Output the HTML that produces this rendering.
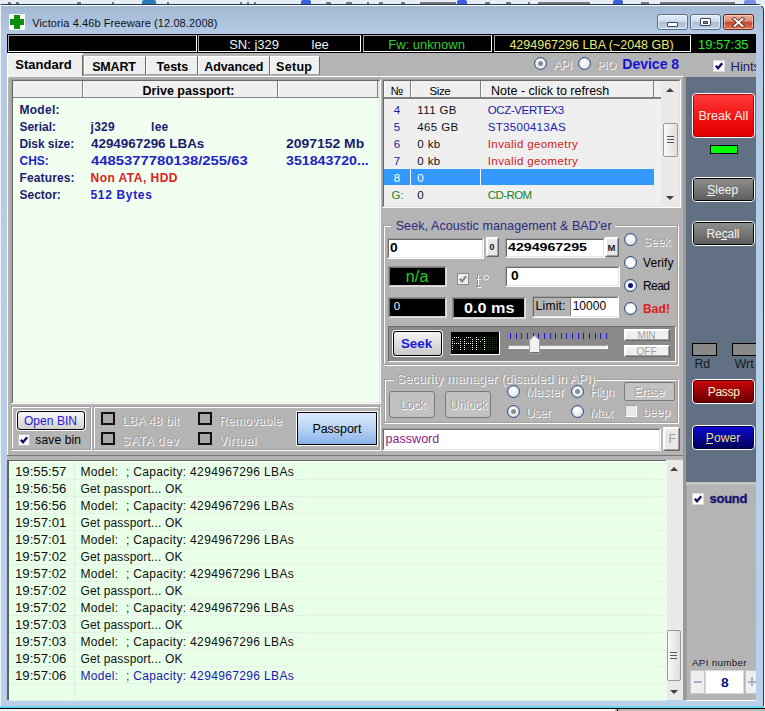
<!DOCTYPE html>
<html><head><meta charset="utf-8">
<style>
*{box-sizing:border-box;margin:0;padding:0}
html,body{width:765px;height:711px;overflow:hidden;background:#f4f6f9;font-family:"Liberation Sans",sans-serif;position:relative}
.a{position:absolute}
.t{position:absolute;white-space:pre;line-height:1}
</style></head><body>
<div class="a" style="left:0px;top:0px;width:765px;height:711px;background:#f4f6f9"></div>
<div class="a" style="left:0px;top:0px;width:765px;height:4px;background:#e6edf6"></div>
<div class="a" style="left:142px;top:0px;width:14px;height:4px;background:#2a7ab8;border-radius:2px 2px 0 0"></div>
<div class="a" style="left:301px;top:0px;width:10px;height:4px;background:#3a5ee0;border-radius:2px 2px 0 0"></div>
<div class="a" style="left:457px;top:0px;width:10px;height:4px;background:#3a5ee0;border-radius:2px 2px 0 0"></div>
<div class="a" style="left:613px;top:0px;width:10px;height:4px;background:#3a5ee0;border-radius:2px 2px 0 0"></div>
<div class="a" style="left:744px;top:0px;width:12px;height:4px;background:#7a8ee8;border-radius:2px 2px 0 0"></div>
<div class="a" style="left:8px;top:2px;width:3px;height:2px;background:#1a1a1a;opacity:.55"></div>
<div class="a" style="left:16px;top:2px;width:3px;height:2px;background:#1a1a1a;opacity:.55"></div>
<div class="a" style="left:77px;top:2px;width:4px;height:2px;background:#1a1a1a;opacity:.55"></div>
<div class="a" style="left:112px;top:2px;width:2px;height:2px;background:#1a1a1a;opacity:.55"></div>
<div class="a" style="left:167px;top:2px;width:2px;height:2px;background:#1a1a1a;opacity:.55"></div>
<div class="a" style="left:240px;top:2px;width:2px;height:2px;background:#1a1a1a;opacity:.55"></div>
<div class="a" style="left:247px;top:2px;width:2px;height:2px;background:#1a1a1a;opacity:.55"></div>
<div class="a" style="left:254px;top:2px;width:2px;height:2px;background:#1a1a1a;opacity:.55"></div>
<div class="a" style="left:326px;top:2px;width:5px;height:2px;background:#1a1a1a;opacity:.55"></div>
<div class="a" style="left:346px;top:2px;width:6px;height:2px;background:#1a1a1a;opacity:.55"></div>
<div class="a" style="left:367px;top:2px;width:2px;height:2px;background:#1a1a1a;opacity:.55"></div>
<div class="a" style="left:379px;top:2px;width:4px;height:2px;background:#1a1a1a;opacity:.55"></div>
<div class="a" style="left:401px;top:2px;width:4px;height:2px;background:#1a1a1a;opacity:.55"></div>
<div class="a" style="left:420px;top:2px;width:36px;height:2px;background:#1a1a1a;opacity:.55"></div>
<div class="a" style="left:485px;top:2px;width:5px;height:2px;background:#1a1a1a;opacity:.55"></div>
<div class="a" style="left:506px;top:2px;width:5px;height:2px;background:#1a1a1a;opacity:.55"></div>
<div class="a" style="left:528px;top:2px;width:2px;height:2px;background:#1a1a1a;opacity:.55"></div>
<div class="a" style="left:538px;top:2px;width:52px;height:2px;background:#1a1a1a;opacity:.55"></div>
<div class="a" style="left:641px;top:2px;width:8px;height:2px;background:#1a1a1a;opacity:.55"></div>
<div class="a" style="left:660px;top:2px;width:75px;height:2px;background:#1a1a1a;opacity:.55"></div>
<div class="a" style="left:0px;top:4px;width:764px;height:704px;background:linear-gradient(#a2b8d3,#b4cae4 30px,#b9d1ea);border-radius:0 6px 0 0;border:1px solid #24384e;border-bottom:none;border-left-color:#f0f4f8"></div>
<div class="a" style="left:1px;top:5px;width:761px;height:1px;background:#fff"></div>
<div class="a" style="left:0px;top:706px;width:764px;height:2px;background:#6cd4ee"></div>
<div class="a" style="left:0px;top:708px;width:765px;height:1px;background:#000"></div>
<div class="a" style="left:0px;top:709px;width:765px;height:2px;background:#f6f6f6"></div>
<div class="a" style="left:615px;top:709px;width:150px;height:2px;background:#303030;opacity:.3"></div>
<div class="a" style="left:617px;top:709px;width:1px;height:2px;background:#000"></div>
<div class="a" style="left:764px;top:4px;width:1px;height:704px;background:#f4f4f4"></div>
<div class="a" style="left:9px;top:14px;width:16px;height:16px;background:#fff"></div>
<div class="a" style="left:10px;top:19px;width:14px;height:6px;background:#0b8f0b"></div>
<div class="a" style="left:14px;top:15px;width:6px;height:14px;background:#0b8f0b"></div>
<div class="t" style="left:32.3px;top:18.14px;font-size:11px;font-weight:400;color:#0a1220;letter-spacing:0.09px;">Victoria 4.46b Freeware (12.08.2008)</div>
<div class="a" style="left:657px;top:14px;width:31px;height:16px;border:1px solid #5c6d88;border-radius:3px;background:linear-gradient(#e6eef8,#cfdcec 45%,#a9bdd6 52%,#c0d2e8);box-shadow:inset 0 0 0 1px rgba(255,255,255,.6)"></div>
<div class="a" style="left:690px;top:14px;width:31px;height:16px;border:1px solid #5c6d88;border-radius:3px;background:linear-gradient(#e6eef8,#cfdcec 45%,#a9bdd6 52%,#c0d2e8);box-shadow:inset 0 0 0 1px rgba(255,255,255,.6)"></div>
<div class="a" style="left:667px;top:22px;width:11px;height:5px;background:#fff;border:1px solid #404a5c;border-radius:1px"></div>
<div class="a" style="left:700px;top:18px;width:11px;height:8px;background:#fff;border:1px solid #3a4456;border-radius:1px"></div>
<div class="a" style="left:703px;top:21px;width:5px;height:3px;background:#8a96a8;border:1px solid #3a4456"></div>
<div class="a" style="left:723px;top:14px;width:31px;height:16px;border:1px solid #6a2418;border-radius:3px;background:linear-gradient(#eeb09e,#df8a72 45%,#c9472c 52%,#dc7658);box-shadow:inset 0 0 0 1px rgba(255,220,200,.6)"></div>
<svg class="a" style="left:732px;top:17px" width="13" height="11" viewBox="0 0 13 11"><path d="M2.5 2 L10.5 9 M10.5 2 L2.5 9" stroke="#4a2018" stroke-width="3.6" stroke-linecap="square"/><path d="M2.5 2 L10.5 9 M10.5 2 L2.5 9" stroke="#fff" stroke-width="2" stroke-linecap="square"/></svg>
<div class="a" style="left:0;top:0;width:756px;height:701px;overflow:hidden">
<div class="a" style="left:7px;top:34px;width:749px;height:666px;background:#b4b4b4"></div>
<div class="a" style="left:7px;top:34px;width:749px;height:19px;background:#000"></div>
<div class="a" style="left:8px;top:35px;width:189px;height:17px;border:1px solid;border-color:#a8a8a8 #fff #fff #a8a8a8"></div>
<div class="a" style="left:198px;top:35px;width:163px;height:17px;border:1px solid;border-color:#a8a8a8 #fff #fff #a8a8a8"></div>
<div class="a" style="left:363px;top:35px;width:129px;height:17px;border:1px solid;border-color:#a8a8a8 #fff #fff #a8a8a8"></div>
<div class="a" style="left:494px;top:35px;width:197px;height:17px;border:1px solid;border-color:#a8a8a8 #fff #fff #a8a8a8"></div>
<div class="t" style="left:229.2px;top:38.05px;font-size:13px;font-weight:400;color:#f0f0f0;">SN: j329</div>
<div class="t" style="left:311.5px;top:38.05px;font-size:13px;font-weight:400;color:#f0f0f0;">lee</div>
<div class="t" style="left:388.3px;top:38.05px;font-size:13px;font-weight:400;color:#33cc33;">Fw: unknown</div>
<div class="t" style="left:509.4px;top:39.27px;font-size:12.5px;font-weight:400;color:#e8e870;">4294967296 LBA (~2048 GB)</div>
<div class="t" style="left:698px;top:38.05px;font-size:13px;font-weight:400;color:#22ee22;">19:57:35</div>
<div class="a" style="left:7px;top:53px;width:76px;height:25px;background:#efefef;border-left:1px solid #fff;border-top:1px solid #fff"></div>
<div class="a" style="left:82px;top:55px;width:1px;height:21px;background:#696969"></div>
<div class="a" style="left:83px;top:55px;width:1px;height:21px;background:#a0a0a0"></div>
<div class="t" style="left:15.3px;top:58.25px;font-size:13px;font-weight:700;color:#000;">Standard</div>
<div class="a" style="left:84px;top:56px;width:62px;height:19px;background:#efefef;border-top:1px solid #fff;border-left:1px solid #fff;border-right:1px solid #696969;border-bottom:1px solid #a0a0a0"></div>
<div class="t" style="left:92.2px;top:60.67px;font-size:12.5px;font-weight:700;color:#000;letter-spacing:-0.16px;">SMART</div>
<div class="a" style="left:146px;top:56px;width:52px;height:19px;background:#efefef;border-top:1px solid #fff;border-left:1px solid #fff;border-right:1px solid #696969;border-bottom:1px solid #a0a0a0"></div>
<div class="t" style="left:156.5px;top:60.67px;font-size:12.5px;font-weight:700;color:#000;">Tests</div>
<div class="a" style="left:198px;top:56px;width:72px;height:19px;background:#efefef;border-top:1px solid #fff;border-left:1px solid #fff;border-right:1px solid #696969;border-bottom:1px solid #a0a0a0"></div>
<div class="t" style="left:204.3px;top:60.67px;font-size:12.5px;font-weight:700;color:#000;letter-spacing:-0.11px;">Advanced</div>
<div class="a" style="left:270px;top:56px;width:50px;height:19px;background:#efefef;border-top:1px solid #fff;border-left:1px solid #fff;border-right:1px solid #696969;border-bottom:1px solid #a0a0a0"></div>
<div class="t" style="left:276px;top:60.67px;font-size:12.5px;font-weight:700;color:#000;letter-spacing:0.32px;">Setup</div>
<div class="a" style="left:83px;top:76px;width:600px;height:1px;background:#fff"></div>
<div class="a" style="left:7px;top:77px;width:1px;height:378px;background:#fff"></div>
<div class="a" style="left:534px;top:57px;width:13px;height:13px;border-radius:50%;border:1px solid #2f4f7a;background:radial-gradient(circle at 40% 35%,#fff,#ececec 60%,#dcdcdc);box-shadow:inset 0 0 0 1px #c8d4e4"></div>
<div class="a" style="left:538px;top:61px;width:5px;height:5px;border-radius:50%;background:#8c8c8c"></div>
<div class="t" style="left:553.2px;top:59.29px;font-size:12px;font-weight:400;color:#a0a0a0;letter-spacing:-0.27px;text-shadow:1px 1px 0 #fff;">API</div>
<div class="a" style="left:578px;top:57px;width:13px;height:13px;border-radius:50%;border:1px solid #2f4f7a;background:radial-gradient(circle at 40% 35%,#fff,#ececec 60%,#dcdcdc);box-shadow:inset 0 0 0 1px #c8d4e4"></div>
<div class="t" style="left:597.2px;top:60.14px;font-size:11px;font-weight:400;color:#a0a0a0;text-shadow:1px 1px 0 #fff;">PIO</div>
<div class="t" style="left:622.3px;top:57.30px;font-size:14px;font-weight:700;color:#1414d8;">Device 8</div>
<div class="a" style="left:713px;top:60px;width:12px;height:12px;background:#fff;border:1px solid #d8d8d8"></div>
<svg class="a" style="left:713px;top:60px" width="12" height="12" viewBox="0 0 12 12"><path d="M2.8 5.8 L5 8.2 L9.2 3.2" stroke="#101060" stroke-width="2.4" fill="none"/></svg>
<div class="t" style="left:730.5px;top:59.75px;font-size:13px;font-weight:400;color:#1a1a6a;">Hints</div>
<div class="a" style="left:9px;top:77px;width:372px;height:327px;background:#adadad"></div>
<div class="a" style="left:11px;top:79px;width:370px;height:325px;border:1px solid;border-color:#a0a0a0 #fff #fff #a0a0a0"></div>
<div class="a" style="left:12px;top:80px;width:368px;height:323px;border:1px solid;border-color:#696969 #e3e3e3 #e3e3e3 #696969;background:#f0fff0;"></div>
<div class="a" style="left:13px;top:81px;width:366px;height:16px;background:#efefef"></div>
<div class="a" style="left:13px;top:97px;width:366px;height:1px;background:#808080"></div>
<div class="a" style="left:82px;top:81px;width:1px;height:16px;background:#808080"></div>
<div class="a" style="left:83px;top:81px;width:1px;height:16px;background:#fff"></div>
<div class="a" style="left:277px;top:81px;width:1px;height:16px;background:#808080"></div>
<div class="a" style="left:278px;top:81px;width:1px;height:16px;background:#fff"></div>
<div class="a" style="left:377px;top:81px;width:1px;height:16px;background:#808080"></div>
<div class="t" style="left:142.5px;top:84.87px;font-size:12.5px;font-weight:700;color:#000;letter-spacing:0.02px;">Drive passport:</div>
<div class="t" style="left:19.5px;top:103.89px;font-size:12px;font-weight:700;color:#1c1c70;letter-spacing:0.27px;">Model:</div>
<div class="t" style="left:19.5px;top:120.89px;font-size:12px;font-weight:700;color:#1c1c70;letter-spacing:-0.03px;">Serial:</div>
<div class="t" style="left:19.5px;top:137.89px;font-size:12px;font-weight:700;color:#1c1c70;letter-spacing:-0.08px;">Disk size:</div>
<div class="t" style="left:19.5px;top:154.89px;font-size:12px;font-weight:700;color:#2222c8;">CHS:</div>
<div class="t" style="left:19.5px;top:171.89px;font-size:12px;font-weight:700;color:#1c1c70;letter-spacing:0.13px;">Features:</div>
<div class="t" style="left:19.5px;top:188.89px;font-size:12px;font-weight:700;color:#1c1c70;">Sector:</div>
<div class="t" style="left:90.5px;top:120.89px;font-size:12px;font-weight:700;color:#1c1c70;letter-spacing:0.3px;">j329</div>
<div class="t" style="left:151px;top:120.89px;font-size:12px;font-weight:700;color:#1c1c70;letter-spacing:0.3px;">lee</div>
<div class="t" style="left:90.5px;top:137.89px;font-size:12px;font-weight:700;color:#1c1c70;transform:scaleX(1.1173570019723864);transform-origin:0 0;">4294967296 LBAs</div>
<div class="t" style="left:285.6px;top:137.89px;font-size:12px;font-weight:700;color:#1c1c70;transform:scaleX(1.1602373887240356);transform-origin:0 0;">2097152 Mb</div>
<div class="t" style="left:90.5px;top:154.89px;font-size:12px;font-weight:700;color:#2222c8;transform:scaleX(1.2358044164037854);transform-origin:0 0;">4485377780138/255/63</div>
<div class="t" style="left:285.6px;top:154.89px;font-size:12px;font-weight:700;color:#2222c8;transform:scaleX(1.181169757489301);transform-origin:0 0;">351843720...</div>
<div class="t" style="left:90.5px;top:171.89px;font-size:12px;font-weight:700;color:#dd2020;letter-spacing:0.47px;">Non ATA, HDD</div>
<div class="t" style="left:90.5px;top:188.89px;font-size:12px;font-weight:700;color:#2222c8;letter-spacing:0.66px;">512 Bytes</div>
<div class="a" style="left:382px;top:79px;width:299px;height:129px;border:1px solid;border-color:#a0a0a0 #fff #fff #a0a0a0"></div>
<div class="a" style="left:383px;top:80px;width:297px;height:127px;border:1px solid;border-color:#696969 #e3e3e3 #e3e3e3 #696969;background:#efefef;"></div>
<div class="a" style="left:384px;top:81px;width:27px;height:16px;background:#efefef;border-left:1px solid #fff;border-right:1px solid #808080"></div>
<div class="a" style="left:411px;top:81px;width:70px;height:16px;background:#efefef;border-left:1px solid #fff;border-right:1px solid #808080"></div>
<div class="a" style="left:481px;top:81px;width:173px;height:16px;background:#efefef;border-left:1px solid #fff;border-right:1px solid #808080"></div>
<div class="a" style="left:653px;top:81px;width:1px;height:16px;background:#808080"></div>
<div class="a" style="left:384px;top:97px;width:277px;height:2px;background:#808080"></div>
<div class="t" style="left:390.6px;top:85.29px;font-size:12px;font-weight:400;color:#000;">№</div>
<div class="t" style="left:429.5px;top:85.72px;font-size:11.5px;font-weight:400;color:#000;letter-spacing:-0.4px;">Size</div>
<div class="t" style="left:491px;top:84.87px;font-size:12.5px;font-weight:400;color:#000;letter-spacing:0.01px;">Note - click to refresh</div>
<div class="a" style="left:384px;top:169px;width:270px;height:16px;background:#3399ff"></div>
<div class="a" style="left:410px;top:169px;width:1px;height:16px;background:#fff"></div>
<div class="a" style="left:480px;top:169px;width:1px;height:16px;background:#fff"></div>
<div class="t" style="left:393.8px;top:104.52px;font-size:11.5px;font-weight:400;color:#2020a8;">4</div>
<div class="t" style="left:417.3px;top:104.52px;font-size:11.5px;font-weight:400;color:#101010;letter-spacing:0.38px;">111 GB</div>
<div class="t" style="left:487.8px;top:104.52px;font-size:11.5px;font-weight:400;color:#2020a8;letter-spacing:-0.39px;">OCZ-VERTEX3</div>
<div class="t" style="left:393.8px;top:121.52px;font-size:11.5px;font-weight:400;color:#2020a8;">5</div>
<div class="t" style="left:417.3px;top:121.52px;font-size:11.5px;font-weight:400;color:#101010;letter-spacing:0.38px;">465 GB</div>
<div class="t" style="left:487.8px;top:121.52px;font-size:11.5px;font-weight:400;color:#2020a8;letter-spacing:0.3px;">ST3500413AS</div>
<div class="t" style="left:393.8px;top:138.52px;font-size:11.5px;font-weight:400;color:#2020a8;">6</div>
<div class="t" style="left:417.3px;top:138.52px;font-size:11.5px;font-weight:400;color:#101010;letter-spacing:0.38px;">0 kb</div>
<div class="t" style="left:487.8px;top:138.52px;font-size:11.5px;font-weight:400;color:#d02020;letter-spacing:0.38px;">Invalid geometry</div>
<div class="t" style="left:393.8px;top:155.52px;font-size:11.5px;font-weight:400;color:#2020a8;">7</div>
<div class="t" style="left:417.3px;top:155.52px;font-size:11.5px;font-weight:400;color:#101010;letter-spacing:0.38px;">0 kb</div>
<div class="t" style="left:487.8px;top:155.52px;font-size:11.5px;font-weight:400;color:#d02020;letter-spacing:0.38px;">Invalid geometry</div>
<div class="t" style="left:393.8px;top:172.52px;font-size:11.5px;font-weight:400;color:#fff;">8</div>
<div class="t" style="left:417.3px;top:172.52px;font-size:11.5px;font-weight:400;color:#fff;letter-spacing:0.38px;">0</div>
<div class="t" style="left:391.5px;top:189.52px;font-size:11.5px;font-weight:400;color:#208020;">G:</div>
<div class="t" style="left:417.3px;top:189.52px;font-size:11.5px;font-weight:400;color:#101010;letter-spacing:0.38px;">0</div>
<div class="t" style="left:487.8px;top:189.52px;font-size:11.5px;font-weight:400;color:#208020;letter-spacing:-0.6px;">CD-ROM</div>
<div class="a" style="left:661px;top:81px;width:18px;height:126px;background:#e9e9e9"></div>
<svg class="a" style="left:665px;top:87px" width="10" height="6"><path d="M1 5 L5 1 L9 5Z" fill="#404040"/></svg>
<svg class="a" style="left:665px;top:195px" width="10" height="6"><path d="M1 1 L5 5 L9 1Z" fill="#404040"/></svg>
<div class="a" style="left:663px;top:123px;width:15px;height:34px;border:1px solid #999;border-radius:2px;background:linear-gradient(90deg,#fafafa,#dedede)"></div>
<div class="a" style="left:667px;top:136px;width:7px;height:1px;background:#555"></div>
<div class="a" style="left:667px;top:139px;width:7px;height:1px;background:#555"></div>
<div class="a" style="left:667px;top:142px;width:7px;height:1px;background:#555"></div>
<div class="a" style="left:683px;top:77px;width:3px;height:623px;background:#9a9a9a"></div>
<div class="a" style="left:686px;top:77px;width:70px;height:405px;background:#617082"></div>
<div class="a" style="left:686px;top:482px;width:70px;height:3px;background:#c4c4c4"></div>
<div class="a" style="left:686px;top:485px;width:70px;height:215px;background:#b4b4b4;border-left:1px solid #a0a0a0"></div>
<div class="a" style="left:692px;top:93px;width:63px;height:45px;border:1px solid #fff;border-radius:4px;background:#b00000"></div>
<div class="a" style="left:694px;top:95px;width:59px;height:41px;border-radius:1px;background:linear-gradient(#ff3a3a,#f01010 60%,#e00000)"></div>
<div class="t" style="left:698.4px;top:109.87px;font-size:12.5px;font-weight:400;color:#fff0f0;letter-spacing:0.06px;">Break All</div>
<div class="a" style="left:710px;top:145px;width:28px;height:9px;background:#00ff00;border:1px solid #000"></div>
<div class="a" style="left:692px;top:177px;width:63px;height:25px;border:1px solid #fff;border-radius:4px;background:#000"></div>
<div class="a" style="left:694px;top:179px;width:59px;height:21px;border-radius:1px;background:linear-gradient(#8e8e8e,#5e5e5e)"></div>
<div class="t" style="left:707.2px;top:184.29px;font-size:12px;font-weight:400;color:#f4f4f4;letter-spacing:0.05px;">Sleep</div>
<div class="a" style="left:707px;top:195px;width:8px;height:1px;background:#f4f4f4"></div>
<div class="a" style="left:692px;top:221px;width:63px;height:25px;border:1px solid #fff;border-radius:4px;background:#000"></div>
<div class="a" style="left:694px;top:223px;width:59px;height:21px;border-radius:1px;background:linear-gradient(#8e8e8e,#5e5e5e)"></div>
<div class="t" style="left:706.4px;top:228.29px;font-size:12px;font-weight:400;color:#f4f4f4;letter-spacing:-0.05px;">Recall</div>
<div class="a" style="left:721px;top:239px;width:6px;height:1px;background:#f4f4f4"></div>
<div class="a" style="left:692px;top:343px;width:25px;height:13px;background:#888;border:1px solid #000"></div>
<div class="a" style="left:732px;top:343px;width:24px;height:13px;background:#888;border:1px solid #000;border-right:none"></div>
<div class="t" style="left:694.6px;top:357.87px;font-size:12.5px;font-weight:400;color:#141c28;letter-spacing:-0.3px;">Rd</div>
<div class="t" style="left:734.5px;top:357.87px;font-size:12.5px;font-weight:400;color:#141c28;">Wrt</div>
<div class="a" style="left:692px;top:379px;width:63px;height:25px;border:1px solid #fff;border-radius:4px;background:#500000"></div>
<div class="a" style="left:694px;top:381px;width:59px;height:21px;border-radius:1px;background:linear-gradient(#c80808,#6a0000)"></div>
<div class="t" style="left:707.7px;top:386.09px;font-size:12px;font-weight:400;color:#fff4d0;letter-spacing:-0.3px;">Passp</div>
<div class="a" style="left:692px;top:425px;width:63px;height:25px;border:1px solid #fff;border-radius:4px;background:#000040"></div>
<div class="a" style="left:694px;top:427px;width:59px;height:21px;border-radius:1px;background:linear-gradient(#0a0ad0,#00005a)"></div>
<div class="t" style="left:705.8px;top:432.09px;font-size:12px;font-weight:400;color:#f0e080;letter-spacing:0.08px;">Power</div>
<div class="a" style="left:706px;top:443px;width:7px;height:1px;background:#f0e080"></div>
<div class="a" style="left:692px;top:493px;width:12px;height:12px;background:#fff;border:1px solid #d8d8d8"></div>
<svg class="a" style="left:692px;top:493px" width="12" height="12" viewBox="0 0 12 12"><path d="M2.8 5.8 L5 8.2 L9.2 3.2" stroke="#101060" stroke-width="2.4" fill="none"/></svg>
<div class="t" style="left:709.5px;top:492.45px;font-size:13px;font-weight:700;color:#141470;letter-spacing:-0.25px;-webkit-text-stroke:0.35px #141470;">sound</div>
<div class="t" style="left:692px;top:657.95px;font-size:9.8px;font-weight:400;color:#1a1a1a;letter-spacing:0.3px;">API number</div>
<div class="a" style="left:690px;top:670px;width:15px;height:24px;background:#efefef;border:1px solid #c8c8c8"></div>
<div class="a" style="left:694px;top:681px;width:8px;height:2px;background:#9fb4cc"></div>
<div class="a" style="left:705px;top:670px;width:39px;height:24px;background:#fff;border:1px solid #d8d8d8"></div>
<div class="t" style="left:721px;top:676.99px;font-size:12px;font-weight:700;color:#101080;transform:scaleX(1.15);transform-origin:0 0;">8</div>
<div class="a" style="left:745px;top:670px;width:11px;height:24px;background:#efefef;border:1px solid #c8c8c8;border-right:none"></div>
<div class="a" style="left:748px;top:681px;width:8px;height:2px;background:#9fb4cc"></div>
<div class="a" style="left:686px;top:700px;width:70px;height:1px;background:#fff"></div>
<div class="a" style="left:751px;top:677px;width:2px;height:9px;background:#9fb4cc"></div>
<div class="a" style="left:383px;top:225px;width:295px;height:140px;border:1px solid #a0a0a0"></div>
<div class="a" style="left:384px;top:226px;width:293px;height:138px;border:1px solid #fff;border-right-color:transparent;border-bottom-color:transparent"></div>
<div class="a" style="left:383px;top:225px;width:296px;height:141px;border:1px solid #fff;border-left-color:transparent;border-top-color:transparent"></div>
<div class="a" style="left:391px;top:220px;width:224px;height:10px;background:#b4b4b4"></div>
<div class="t" style="left:395.7px;top:219.67px;font-size:12.5px;font-weight:400;color:#2a2a80;letter-spacing:0.09px;">Seek, Acoustic management &amp; BAD&#x27;er</div>
<div class="a" style="left:387px;top:238px;width:97px;height:21px;border:1px solid;border-color:#a0a0a0 #fff #fff #a0a0a0"></div>
<div class="a" style="left:388px;top:239px;width:95px;height:19px;border:1px solid;border-color:#696969 #e3e3e3 #e3e3e3 #696969;background:#fff;"></div>
<div class="t" style="left:390.3px;top:241.84px;font-size:12.3px;font-weight:700;color:#000;transform:scaleX(1.12);transform-origin:0 0;">0</div>
<div class="a" style="left:486px;top:237px;width:13px;height:20px;border:1px solid;border-color:#fff #696969 #696969 #fff;background:#e8e8e8"></div>
<div class="a" style="left:487px;top:238px;width:11px;height:18px;border:1px solid;border-color:#fff #a0a0a0 #a0a0a0 #fff"></div>
<div class="t" style="left:489.5px;top:242.83px;font-size:9px;font-weight:700;color:#202020;">0</div>
<div class="a" style="left:505px;top:238px;width:100px;height:20px;border:1px solid;border-color:#a0a0a0 #fff #fff #a0a0a0"></div>
<div class="a" style="left:506px;top:239px;width:98px;height:18px;border:1px solid;border-color:#696969 #e3e3e3 #e3e3e3 #696969;background:#fff;"></div>
<div class="t" style="left:508.4px;top:242.32px;font-size:11.5px;font-weight:700;color:#000;transform:scaleX(1.234375);transform-origin:0 0;">4294967295</div>
<div class="a" style="left:605px;top:237px;width:14px;height:20px;border:1px solid;border-color:#fff #696969 #696969 #fff;background:#e8e8e8"></div>
<div class="a" style="left:606px;top:238px;width:12px;height:18px;border:1px solid;border-color:#fff #a0a0a0 #a0a0a0 #fff"></div>
<div class="t" style="left:607.5px;top:242.91px;font-size:9.5px;font-weight:700;color:#202020;">M</div>
<div class="a" style="left:388px;top:266px;width:59px;height:21px;border:1px solid;border-color:#909090 #e0e0e0 #e0e0e0 #909090"></div>
<div class="a" style="left:389px;top:267px;width:57px;height:19px;border:1px solid;border-color:#707070 #d0d0d0 #d0d0d0 #707070;background:#000;"></div>
<div class="t" style="left:405.7px;top:268.51px;font-size:16px;font-weight:400;color:#22cc22;letter-spacing:0.28px;">n/a</div>
<div class="a" style="left:457px;top:273px;width:12px;height:12px;background:#eeeeee;border:1px solid #8a8a8a"></div>
<svg class="a" style="left:457px;top:273px" width="12" height="12" viewBox="0 0 12 12"><path d="M2.8 5.8 L5 8.2 L9.2 3.2" stroke="#8a8a8a" stroke-width="2.4" fill="none"/></svg>
<svg class="a" style="left:474px;top:272px" width="16" height="16"><path d="M3.5 2 V13.5 M6 14.5 H2.5 M2 6.5 H7" stroke="#8c8c8c" stroke-width="1" fill="none"/><path d="M4.5 3 V13 M3.5 15.5 H7.5 M3 7.5 H7" stroke="#fff" stroke-width="1" fill="none"/><circle cx="11.5" cy="5" r="2.5" stroke="#8c8c8c" fill="none"/><circle cx="12" cy="5.5" r="2.5" stroke="#fff" fill="none" opacity=".9"/></svg>
<div class="a" style="left:505px;top:266px;width:115px;height:21px;border:1px solid;border-color:#a0a0a0 #fff #fff #a0a0a0"></div>
<div class="a" style="left:506px;top:267px;width:113px;height:19px;border:1px solid;border-color:#696969 #e3e3e3 #e3e3e3 #696969;background:#fff;"></div>
<div class="t" style="left:511px;top:270.04px;font-size:12.3px;font-weight:700;color:#000;transform:scaleX(1.12);transform-origin:0 0;">0</div>
<div class="a" style="left:388px;top:297px;width:59px;height:21px;border:1px solid;border-color:#909090 #e0e0e0 #e0e0e0 #909090"></div>
<div class="a" style="left:389px;top:298px;width:57px;height:19px;border:1px solid;border-color:#707070 #d0d0d0 #d0d0d0 #707070;background:#000;"></div>
<div class="t" style="left:393.7px;top:301.22px;font-size:11.5px;font-weight:400;color:#f0f0f0;">0</div>
<div class="a" style="left:452px;top:297px;width:74px;height:22px;border:1px solid;border-color:#909090 #e0e0e0 #e0e0e0 #909090"></div>
<div class="a" style="left:453px;top:298px;width:72px;height:20px;border:1px solid;border-color:#707070 #d0d0d0 #d0d0d0 #707070;background:#000;"></div>
<div class="t" style="left:464px;top:300.35px;font-size:15px;font-weight:700;color:#f8f8f8;transform:scaleX(1.0792291220556745);transform-origin:0 0;">0.0 ms</div>
<div class="a" style="left:532px;top:296px;width:87px;height:22px;border:1px solid;border-color:#a0a0a0 #fff #fff #a0a0a0"></div>
<div class="a" style="left:533px;top:297px;width:85px;height:20px;border:1px solid;border-color:#696969 #e3e3e3 #e3e3e3 #696969;background:#b4b4b4;"></div>
<div class="a" style="left:570px;top:298px;width:48px;height:18px;background:#fff;border-left:1px solid #808080"></div>
<div class="t" style="left:535.5px;top:300.49px;font-size:12px;font-weight:400;color:#000;letter-spacing:0.27px;">Limit:</div>
<div class="t" style="left:572.7px;top:300.49px;font-size:12px;font-weight:400;color:#000;">10000</div>
<div class="a" style="left:624px;top:233px;width:13px;height:13px;border-radius:50%;border:1px solid #2f4f7a;background:radial-gradient(circle at 40% 35%,#fff,#ececec 60%,#dcdcdc);box-shadow:inset 0 0 0 1px #c8d4e4"></div>
<div class="t" style="left:643px;top:236.29px;font-size:12px;font-weight:400;color:#a0a0a0;text-shadow:1px 1px 0 #fff;">Seek</div>
<div class="a" style="left:624px;top:256px;width:13px;height:13px;border-radius:50%;border:1px solid #2f4f7a;background:radial-gradient(circle at 40% 35%,#fff,#fff 60%,#dcdcdc);box-shadow:inset 0 0 0 1px #c8d4e4"></div>
<div class="t" style="left:643px;top:256.79px;font-size:12px;font-weight:400;color:#000;letter-spacing:0.08px;">Verify</div>
<div class="a" style="left:624px;top:279px;width:13px;height:13px;border-radius:50%;border:1px solid #2f4f7a;background:radial-gradient(circle at 40% 35%,#fff,#fff 60%,#dcdcdc);box-shadow:inset 0 0 0 1px #c8d4e4"></div>
<div class="a" style="left:628px;top:283px;width:5px;height:5px;border-radius:50%;background:#101070"></div>
<div class="t" style="left:643px;top:280.49px;font-size:12px;font-weight:400;color:#000;letter-spacing:-0.56px;">Read</div>
<div class="a" style="left:624px;top:302px;width:13px;height:13px;border-radius:50%;border:1px solid #2f4f7a;background:radial-gradient(circle at 40% 35%,#fff,#fff 60%,#dcdcdc);box-shadow:inset 0 0 0 1px #c8d4e4"></div>
<div class="t" style="left:643px;top:303.49px;font-size:12px;font-weight:700;color:#e02020;letter-spacing:0.11px;">Bad!</div>
<div class="a" style="left:388px;top:326px;width:288px;height:36px;background:#8a8a8a;border:1px solid;border-color:#6a6a6a #fff #fff #6a6a6a"></div>
<div class="a" style="left:393px;top:331px;width:49px;height:25px;border:1px solid #000;border-radius:3px;background:linear-gradient(#f4f4f4,#c8c8c8);box-shadow:0 0 0 1px #fff"></div>
<div class="t" style="left:401px;top:337.69px;font-size:12px;font-weight:700;color:#1a1ae0;transform:scaleX(1.1071428571428572);transform-origin:0 0;">Seek</div>
<div class="a" style="left:450px;top:331px;width:50px;height:24px;background:#000;border:1px solid;border-color:#8a8a8a #fff #fff #8a8a8a"></div>
<svg class="a" style="left:451px;top:332px" width="48" height="23"><rect x="1" y="5" width="1" height="1" fill="#223022"/><rect x="3" y="5" width="1" height="1" fill="#ffffff"/><rect x="5" y="5" width="1" height="1" fill="#ffffff"/><rect x="7" y="5" width="1" height="1" fill="#ffffff"/><rect x="9" y="5" width="1" height="1" fill="#223022"/><rect x="11" y="5" width="1" height="1" fill="#223022"/><rect x="13" y="5" width="1" height="1" fill="#223022"/><rect x="15" y="5" width="1" height="1" fill="#ffffff"/><rect x="17" y="5" width="1" height="1" fill="#ffffff"/><rect x="19" y="5" width="1" height="1" fill="#ffffff"/><rect x="21" y="5" width="1" height="1" fill="#223022"/><rect x="23" y="5" width="1" height="1" fill="#223022"/><rect x="25" y="5" width="1" height="1" fill="#ffffff"/><rect x="27" y="5" width="1" height="1" fill="#223022"/><rect x="29" y="5" width="1" height="1" fill="#223022"/><rect x="31" y="5" width="1" height="1" fill="#223022"/><rect x="33" y="5" width="1" height="1" fill="#ffffff"/><rect x="35" y="5" width="1" height="1" fill="#223022"/><rect x="37" y="5" width="1" height="1" fill="#223022"/><rect x="39" y="5" width="1" height="1" fill="#223022"/><rect x="41" y="5" width="1" height="1" fill="#223022"/><rect x="43" y="5" width="1" height="1" fill="#223022"/><rect x="45" y="5" width="1" height="1" fill="#223022"/><rect x="1" y="7" width="1" height="1" fill="#ffffff"/><rect x="3" y="7" width="1" height="1" fill="#223022"/><rect x="5" y="7" width="1" height="1" fill="#223022"/><rect x="7" y="7" width="1" height="1" fill="#223022"/><rect x="9" y="7" width="1" height="1" fill="#ffffff"/><rect x="11" y="7" width="1" height="1" fill="#223022"/><rect x="13" y="7" width="1" height="1" fill="#ffffff"/><rect x="15" y="7" width="1" height="1" fill="#223022"/><rect x="17" y="7" width="1" height="1" fill="#223022"/><rect x="19" y="7" width="1" height="1" fill="#223022"/><rect x="21" y="7" width="1" height="1" fill="#ffffff"/><rect x="23" y="7" width="1" height="1" fill="#223022"/><rect x="25" y="7" width="1" height="1" fill="#ffffff"/><rect x="27" y="7" width="1" height="1" fill="#ffffff"/><rect x="29" y="7" width="1" height="1" fill="#223022"/><rect x="31" y="7" width="1" height="1" fill="#ffffff"/><rect x="33" y="7" width="1" height="1" fill="#ffffff"/><rect x="35" y="7" width="1" height="1" fill="#223022"/><rect x="37" y="7" width="1" height="1" fill="#223022"/><rect x="39" y="7" width="1" height="1" fill="#223022"/><rect x="41" y="7" width="1" height="1" fill="#223022"/><rect x="43" y="7" width="1" height="1" fill="#223022"/><rect x="45" y="7" width="1" height="1" fill="#223022"/><rect x="1" y="9" width="1" height="1" fill="#ffffff"/><rect x="3" y="9" width="1" height="1" fill="#223022"/><rect x="5" y="9" width="1" height="1" fill="#223022"/><rect x="7" y="9" width="1" height="1" fill="#223022"/><rect x="9" y="9" width="1" height="1" fill="#ffffff"/><rect x="11" y="9" width="1" height="1" fill="#223022"/><rect x="13" y="9" width="1" height="1" fill="#ffffff"/><rect x="15" y="9" width="1" height="1" fill="#223022"/><rect x="17" y="9" width="1" height="1" fill="#223022"/><rect x="19" y="9" width="1" height="1" fill="#223022"/><rect x="21" y="9" width="1" height="1" fill="#ffffff"/><rect x="23" y="9" width="1" height="1" fill="#223022"/><rect x="25" y="9" width="1" height="1" fill="#ffffff"/><rect x="27" y="9" width="1" height="1" fill="#223022"/><rect x="29" y="9" width="1" height="1" fill="#ffffff"/><rect x="31" y="9" width="1" height="1" fill="#223022"/><rect x="33" y="9" width="1" height="1" fill="#ffffff"/><rect x="35" y="9" width="1" height="1" fill="#223022"/><rect x="37" y="9" width="1" height="1" fill="#223022"/><rect x="39" y="9" width="1" height="1" fill="#223022"/><rect x="41" y="9" width="1" height="1" fill="#223022"/><rect x="43" y="9" width="1" height="1" fill="#223022"/><rect x="45" y="9" width="1" height="1" fill="#223022"/><rect x="1" y="11" width="1" height="1" fill="#ffffff"/><rect x="3" y="11" width="1" height="1" fill="#ffffff"/><rect x="5" y="11" width="1" height="1" fill="#ffffff"/><rect x="7" y="11" width="1" height="1" fill="#ffffff"/><rect x="9" y="11" width="1" height="1" fill="#ffffff"/><rect x="11" y="11" width="1" height="1" fill="#223022"/><rect x="13" y="11" width="1" height="1" fill="#ffffff"/><rect x="15" y="11" width="1" height="1" fill="#ffffff"/><rect x="17" y="11" width="1" height="1" fill="#ffffff"/><rect x="19" y="11" width="1" height="1" fill="#ffffff"/><rect x="21" y="11" width="1" height="1" fill="#ffffff"/><rect x="23" y="11" width="1" height="1" fill="#223022"/><rect x="25" y="11" width="1" height="1" fill="#ffffff"/><rect x="27" y="11" width="1" height="1" fill="#223022"/><rect x="29" y="11" width="1" height="1" fill="#223022"/><rect x="31" y="11" width="1" height="1" fill="#223022"/><rect x="33" y="11" width="1" height="1" fill="#ffffff"/><rect x="35" y="11" width="1" height="1" fill="#223022"/><rect x="37" y="11" width="1" height="1" fill="#223022"/><rect x="39" y="11" width="1" height="1" fill="#223022"/><rect x="41" y="11" width="1" height="1" fill="#223022"/><rect x="43" y="11" width="1" height="1" fill="#223022"/><rect x="45" y="11" width="1" height="1" fill="#223022"/><rect x="1" y="13" width="1" height="1" fill="#ffffff"/><rect x="3" y="13" width="1" height="1" fill="#223022"/><rect x="5" y="13" width="1" height="1" fill="#223022"/><rect x="7" y="13" width="1" height="1" fill="#223022"/><rect x="9" y="13" width="1" height="1" fill="#ffffff"/><rect x="11" y="13" width="1" height="1" fill="#223022"/><rect x="13" y="13" width="1" height="1" fill="#ffffff"/><rect x="15" y="13" width="1" height="1" fill="#223022"/><rect x="17" y="13" width="1" height="1" fill="#223022"/><rect x="19" y="13" width="1" height="1" fill="#223022"/><rect x="21" y="13" width="1" height="1" fill="#ffffff"/><rect x="23" y="13" width="1" height="1" fill="#223022"/><rect x="25" y="13" width="1" height="1" fill="#ffffff"/><rect x="27" y="13" width="1" height="1" fill="#223022"/><rect x="29" y="13" width="1" height="1" fill="#223022"/><rect x="31" y="13" width="1" height="1" fill="#223022"/><rect x="33" y="13" width="1" height="1" fill="#ffffff"/><rect x="35" y="13" width="1" height="1" fill="#223022"/><rect x="37" y="13" width="1" height="1" fill="#223022"/><rect x="39" y="13" width="1" height="1" fill="#223022"/><rect x="41" y="13" width="1" height="1" fill="#223022"/><rect x="43" y="13" width="1" height="1" fill="#223022"/><rect x="45" y="13" width="1" height="1" fill="#223022"/><rect x="1" y="15" width="1" height="1" fill="#ffffff"/><rect x="3" y="15" width="1" height="1" fill="#223022"/><rect x="5" y="15" width="1" height="1" fill="#223022"/><rect x="7" y="15" width="1" height="1" fill="#223022"/><rect x="9" y="15" width="1" height="1" fill="#ffffff"/><rect x="11" y="15" width="1" height="1" fill="#223022"/><rect x="13" y="15" width="1" height="1" fill="#ffffff"/><rect x="15" y="15" width="1" height="1" fill="#223022"/><rect x="17" y="15" width="1" height="1" fill="#223022"/><rect x="19" y="15" width="1" height="1" fill="#223022"/><rect x="21" y="15" width="1" height="1" fill="#ffffff"/><rect x="23" y="15" width="1" height="1" fill="#223022"/><rect x="25" y="15" width="1" height="1" fill="#ffffff"/><rect x="27" y="15" width="1" height="1" fill="#223022"/><rect x="29" y="15" width="1" height="1" fill="#223022"/><rect x="31" y="15" width="1" height="1" fill="#223022"/><rect x="33" y="15" width="1" height="1" fill="#ffffff"/><rect x="35" y="15" width="1" height="1" fill="#223022"/><rect x="37" y="15" width="1" height="1" fill="#223022"/><rect x="39" y="15" width="1" height="1" fill="#223022"/><rect x="41" y="15" width="1" height="1" fill="#223022"/><rect x="43" y="15" width="1" height="1" fill="#223022"/><rect x="45" y="15" width="1" height="1" fill="#223022"/><rect x="1" y="17" width="1" height="1" fill="#ffffff"/><rect x="3" y="17" width="1" height="1" fill="#223022"/><rect x="5" y="17" width="1" height="1" fill="#223022"/><rect x="7" y="17" width="1" height="1" fill="#223022"/><rect x="9" y="17" width="1" height="1" fill="#ffffff"/><rect x="11" y="17" width="1" height="1" fill="#223022"/><rect x="13" y="17" width="1" height="1" fill="#ffffff"/><rect x="15" y="17" width="1" height="1" fill="#223022"/><rect x="17" y="17" width="1" height="1" fill="#223022"/><rect x="19" y="17" width="1" height="1" fill="#223022"/><rect x="21" y="17" width="1" height="1" fill="#ffffff"/><rect x="23" y="17" width="1" height="1" fill="#223022"/><rect x="25" y="17" width="1" height="1" fill="#ffffff"/><rect x="27" y="17" width="1" height="1" fill="#223022"/><rect x="29" y="17" width="1" height="1" fill="#223022"/><rect x="31" y="17" width="1" height="1" fill="#223022"/><rect x="33" y="17" width="1" height="1" fill="#ffffff"/><rect x="35" y="17" width="1" height="1" fill="#223022"/><rect x="37" y="17" width="1" height="1" fill="#223022"/><rect x="39" y="17" width="1" height="1" fill="#223022"/><rect x="41" y="17" width="1" height="1" fill="#223022"/><rect x="43" y="17" width="1" height="1" fill="#223022"/><rect x="45" y="17" width="1" height="1" fill="#223022"/></svg>
<div class="a" style="left:510px;top:333px;width:1px;height:6px;background:#1818d0"></div>
<div class="a" style="left:516px;top:333px;width:1px;height:6px;background:#1818d0"></div>
<div class="a" style="left:521px;top:333px;width:1px;height:6px;background:#1818d0"></div>
<div class="a" style="left:527px;top:333px;width:1px;height:6px;background:#1818d0"></div>
<div class="a" style="left:533px;top:333px;width:1px;height:6px;background:#1818d0"></div>
<div class="a" style="left:538px;top:333px;width:1px;height:6px;background:#1818d0"></div>
<div class="a" style="left:544px;top:333px;width:1px;height:6px;background:#1818d0"></div>
<div class="a" style="left:550px;top:333px;width:1px;height:6px;background:#1818d0"></div>
<div class="a" style="left:555px;top:333px;width:1px;height:6px;background:#1818d0"></div>
<div class="a" style="left:561px;top:333px;width:1px;height:6px;background:#1818d0"></div>
<div class="a" style="left:566px;top:333px;width:1px;height:6px;background:#1818d0"></div>
<div class="a" style="left:572px;top:333px;width:1px;height:6px;background:#1818d0"></div>
<div class="a" style="left:578px;top:333px;width:1px;height:6px;background:#1818d0"></div>
<div class="a" style="left:583px;top:333px;width:1px;height:6px;background:#1818d0"></div>
<div class="a" style="left:589px;top:333px;width:1px;height:6px;background:#1818d0"></div>
<div class="a" style="left:595px;top:333px;width:1px;height:6px;background:#1818d0"></div>
<div class="a" style="left:600px;top:333px;width:1px;height:6px;background:#1818d0"></div>
<div class="a" style="left:606px;top:333px;width:1px;height:6px;background:#1818d0"></div>
<div class="a" style="left:508px;top:345px;width:100px;height:4px;background:#f0f0f0;border:1px solid;border-color:#a0a0a0 #fff #fff #a0a0a0"></div>
<svg class="a" style="left:529px;top:335px" width="11" height="19"><path d="M0.5 5 L5.5 0.5 L10.5 5 V18.5 H0.5Z" fill="#f0f0f0" stroke="#a0a0a0"/><path d="M1 17.5 H10" stroke="#707070"/></svg>
<div class="a" style="left:624px;top:329px;width:46px;height:12px;border:1px solid;border-color:#fff #696969 #696969 #fff;background:#efefef"></div>
<div class="a" style="left:625px;top:330px;width:44px;height:10px;border:1px solid;border-color:#fff #a0a0a0 #a0a0a0 #fff"></div>
<div class="t" style="left:637.6px;top:330.99px;font-size:10px;font-weight:400;color:#a0a0a0;letter-spacing:-0.2px;">MIN</div>
<div class="a" style="left:624px;top:345px;width:46px;height:12px;border:1px solid;border-color:#fff #696969 #696969 #fff;background:#efefef"></div>
<div class="a" style="left:625px;top:346px;width:44px;height:10px;border:1px solid;border-color:#fff #a0a0a0 #a0a0a0 #fff"></div>
<div class="t" style="left:636.5px;top:347.49px;font-size:10px;font-weight:400;color:#a0a0a0;">OFF</div>
<div class="a" style="left:384px;top:379px;width:294px;height:44px;border:1px solid #a0a0a0"></div>
<div class="a" style="left:385px;top:380px;width:292px;height:42px;border:1px solid #fff;border-right-color:transparent;border-bottom-color:transparent"></div>
<div class="a" style="left:384px;top:379px;width:295px;height:45px;border:1px solid #fff;border-left-color:transparent;border-top-color:transparent"></div>
<div class="a" style="left:394px;top:372px;width:202px;height:12px;background:#b4b4b4"></div>
<div class="t" style="left:396.7px;top:373.47px;font-size:12.5px;font-weight:400;color:#a0a0a0;letter-spacing:0.17px;text-shadow:1px 1px 0 #fff;">Security manager (disabled in API)</div>
<div class="a" style="left:389px;top:391px;width:46px;height:27px;border:1px solid #7a7a7a;border-radius:3px;background:#c2c2c2"></div>
<div class="t" style="left:400.3px;top:398.99px;font-size:12px;font-weight:400;color:#a0a0a0;letter-spacing:-0.12px;text-shadow:1px 1px 0 #fff;">Lock</div>
<div class="a" style="left:445px;top:391px;width:46px;height:27px;border:1px solid #7a7a7a;border-radius:3px;background:#c2c2c2"></div>
<div class="t" style="left:449.7px;top:398.99px;font-size:12px;font-weight:400;color:#a0a0a0;letter-spacing:0.12px;text-shadow:1px 1px 0 #fff;">Unlock</div>
<div class="a" style="left:507px;top:385px;width:13px;height:13px;border-radius:50%;border:1px solid #2f4f7a;background:radial-gradient(circle at 40% 35%,#fff,#ececec 60%,#dcdcdc);box-shadow:inset 0 0 0 1px #c8d4e4"></div>
<div class="t" style="left:526px;top:386.29px;font-size:12px;font-weight:400;color:#a0a0a0;letter-spacing:0.26px;text-shadow:1px 1px 0 #fff;">Master</div>
<div class="a" style="left:507px;top:405px;width:13px;height:13px;border-radius:50%;border:1px solid #2f4f7a;background:radial-gradient(circle at 40% 35%,#fff,#ececec 60%,#dcdcdc);box-shadow:inset 0 0 0 1px #c8d4e4"></div>
<div class="a" style="left:511px;top:409px;width:5px;height:5px;border-radius:50%;background:#8c8c8c"></div>
<div class="t" style="left:526px;top:406.79px;font-size:12px;font-weight:400;color:#a0a0a0;letter-spacing:-0.3px;text-shadow:1px 1px 0 #fff;">User</div>
<div class="a" style="left:571px;top:385px;width:13px;height:13px;border-radius:50%;border:1px solid #2f4f7a;background:radial-gradient(circle at 40% 35%,#fff,#ececec 60%,#dcdcdc);box-shadow:inset 0 0 0 1px #c8d4e4"></div>
<div class="a" style="left:575px;top:389px;width:5px;height:5px;border-radius:50%;background:#8c8c8c"></div>
<div class="t" style="left:590px;top:386.29px;font-size:12px;font-weight:400;color:#a0a0a0;letter-spacing:-0.23px;text-shadow:1px 1px 0 #fff;">High</div>
<div class="a" style="left:571px;top:405px;width:13px;height:13px;border-radius:50%;border:1px solid #2f4f7a;background:radial-gradient(circle at 40% 35%,#fff,#ececec 60%,#dcdcdc);box-shadow:inset 0 0 0 1px #c8d4e4"></div>
<div class="t" style="left:590px;top:406.79px;font-size:12px;font-weight:400;color:#a0a0a0;text-shadow:1px 1px 0 #fff;">Max</div>
<div class="a" style="left:624px;top:382px;width:51px;height:19px;border:1px solid #7a7a7a;border-radius:2px;background:#c2c2c2"></div>
<div class="t" style="left:634px;top:386.29px;font-size:12px;font-weight:400;color:#a0a0a0;letter-spacing:-0.24px;text-shadow:1px 1px 0 #fff;">Erase</div>
<div class="a" style="left:625px;top:405px;width:12px;height:12px;background:#e8e8e8;border:1px solid;border-color:#a0a0a0 #fff #fff #a0a0a0"></div>
<div class="t" style="left:643px;top:406.29px;font-size:12px;font-weight:400;color:#a0a0a0;letter-spacing:0.1px;text-shadow:1px 1px 0 #fff;">beep</div>
<div class="a" style="left:382px;top:428px;width:279px;height:23px;border:1px solid;border-color:#a0a0a0 #fff #fff #a0a0a0"></div>
<div class="a" style="left:383px;top:429px;width:277px;height:21px;border:1px solid;border-color:#696969 #e3e3e3 #e3e3e3 #696969;background:#fff;"></div>
<div class="t" style="left:385.5px;top:432.57px;font-size:12.5px;font-weight:400;color:#8a1a8a;letter-spacing:0.04px;">password</div>
<div class="a" style="left:663px;top:427px;width:17px;height:24px;border:1px solid;border-color:#fff #696969 #696969 #fff;background:#e9e9e9"></div>
<div class="a" style="left:664px;top:428px;width:15px;height:22px;border:1px solid;border-color:#fff #a0a0a0 #a0a0a0 #fff"></div>
<div class="t" style="left:668.6px;top:433.49px;font-size:12px;font-weight:400;color:#a0a0a0;">F</div>
<div class="a" style="left:11px;top:406px;width:80px;height:44px;border:1px solid #a0a0a0"></div>
<div class="a" style="left:12px;top:407px;width:78px;height:42px;border:1px solid #fff;border-right-color:transparent;border-bottom-color:transparent"></div>
<div class="a" style="left:11px;top:406px;width:81px;height:45px;border:1px solid #fff;border-left-color:transparent;border-top-color:transparent"></div>
<div class="a" style="left:17px;top:411px;width:68px;height:19px;border:1px solid #000;border-radius:3px;background:linear-gradient(#f8f8f8,#d0d0d0);box-shadow:0 0 0 1px #fff"></div>
<div class="t" style="left:24px;top:415.29px;font-size:12px;font-weight:400;color:#2020d0;letter-spacing:0.04px;">Open BIN</div>
<div class="a" style="left:18px;top:434px;width:12px;height:12px;background:#fff;border:1px solid #c0c0c0"></div>
<svg class="a" style="left:18px;top:434px" width="12" height="12" viewBox="0 0 12 12"><path d="M2.8 5.8 L5 8.2 L9.2 3.2" stroke="#101060" stroke-width="2.4" fill="none"/></svg>
<div class="t" style="left:35.3px;top:434.29px;font-size:12px;font-weight:400;color:#000;letter-spacing:0.14px;">save bin</div>
<div class="a" style="left:93px;top:406px;width:287px;height:44px;border:1px solid #a0a0a0"></div>
<div class="a" style="left:94px;top:407px;width:285px;height:42px;border:1px solid #fff;border-right-color:transparent;border-bottom-color:transparent"></div>
<div class="a" style="left:93px;top:406px;width:288px;height:45px;border:1px solid #fff;border-left-color:transparent;border-top-color:transparent"></div>
<div class="a" style="left:101px;top:412px;width:14px;height:13px;background:#a8a8a8;border:2px solid #101010"></div>
<div class="t" style="left:122px;top:415.09px;font-size:12px;font-weight:400;color:#a0a0a0;letter-spacing:0.25px;text-shadow:1px 1px 0 #fff;">LBA 48 bit</div>
<div class="a" style="left:101px;top:432px;width:14px;height:13px;background:#a8a8a8;border:2px solid #101010"></div>
<div class="t" style="left:122px;top:435.09px;font-size:12px;font-weight:400;color:#a0a0a0;letter-spacing:0.67px;text-shadow:1px 1px 0 #fff;">SATA dev</div>
<div class="a" style="left:198px;top:412px;width:14px;height:13px;background:#a8a8a8;border:2px solid #101010"></div>
<div class="t" style="left:219px;top:415.09px;font-size:12px;font-weight:400;color:#a0a0a0;letter-spacing:0.26px;text-shadow:1px 1px 0 #fff;">Removable</div>
<div class="a" style="left:198px;top:432px;width:14px;height:13px;background:#a8a8a8;border:2px solid #101010"></div>
<div class="t" style="left:219px;top:435.09px;font-size:12px;font-weight:400;color:#a0a0a0;letter-spacing:0.58px;text-shadow:1px 1px 0 #fff;">Virtual</div>
<div class="a" style="left:297px;top:412px;width:80px;height:33px;border:1px solid #000;background:linear-gradient(#dceafa,#b4d0f2 55%,#8ab2ea);box-shadow:0 0 0 1px #fff"></div>
<div class="t" style="left:312.4px;top:423.07px;font-size:12.5px;font-weight:400;color:#000;letter-spacing:-0.05px;">Passport</div>
<div class="a" style="left:7px;top:455px;width:676px;height:1px;background:#787878"></div>
<div class="a" style="left:7px;top:460px;width:676px;height:240px;background:#e8ffe8;border-left:2px solid #5a6464;border-top:1px solid #606a60"></div>
<div class="a" style="left:9px;top:461px;width:657px;height:1px;background:#fff"></div>
<div class="a" style="left:9px;top:479px;width:657px;height:1px;background:#e8eee8"></div>
<div class="a" style="left:9px;top:496px;width:657px;height:1px;background:#e8eee8"></div>
<div class="a" style="left:9px;top:513px;width:657px;height:1px;background:#e8eee8"></div>
<div class="a" style="left:9px;top:530px;width:657px;height:1px;background:#e8eee8"></div>
<div class="a" style="left:9px;top:547px;width:657px;height:1px;background:#e8eee8"></div>
<div class="a" style="left:9px;top:564px;width:657px;height:1px;background:#e8eee8"></div>
<div class="a" style="left:9px;top:581px;width:657px;height:1px;background:#e8eee8"></div>
<div class="a" style="left:9px;top:598px;width:657px;height:1px;background:#e8eee8"></div>
<div class="a" style="left:9px;top:615px;width:657px;height:1px;background:#e8eee8"></div>
<div class="a" style="left:9px;top:632px;width:657px;height:1px;background:#e8eee8"></div>
<div class="a" style="left:9px;top:649px;width:657px;height:1px;background:#e8eee8"></div>
<div class="a" style="left:9px;top:666px;width:657px;height:1px;background:#e8eee8"></div>
<div class="a" style="left:9px;top:683px;width:657px;height:1px;background:#e8eee8"></div>
<div class="a" style="left:9px;top:700px;width:657px;height:1px;background:#e8eee8"></div>
<div class="a" style="left:74px;top:461px;width:1px;height:239px;background:#e2f0e2"></div>
<div class="t" style="left:14.6px;top:466.49px;font-size:12px;font-weight:400;color:#101010;transform:scaleX(1.0985010706638114);transform-origin:0 0;">19:55:57</div>
<div class="t" style="left:80.4px;top:466.49px;font-size:12px;font-weight:400;color:#101010;letter-spacing:0.35px;">Model:  ; Capacity: 4294967296 LBAs</div>
<div class="t" style="left:14.6px;top:483.49px;font-size:12px;font-weight:400;color:#101010;transform:scaleX(1.0985010706638114);transform-origin:0 0;">19:56:56</div>
<div class="t" style="left:80.4px;top:483.49px;font-size:12px;font-weight:400;color:#101010;letter-spacing:0.16px;">Get passport... OK</div>
<div class="t" style="left:14.6px;top:500.49px;font-size:12px;font-weight:400;color:#101010;transform:scaleX(1.0985010706638114);transform-origin:0 0;">19:56:56</div>
<div class="t" style="left:80.4px;top:500.49px;font-size:12px;font-weight:400;color:#101010;letter-spacing:0.35px;">Model:  ; Capacity: 4294967296 LBAs</div>
<div class="t" style="left:14.6px;top:517.49px;font-size:12px;font-weight:400;color:#101010;transform:scaleX(1.0985010706638114);transform-origin:0 0;">19:57:01</div>
<div class="t" style="left:80.4px;top:517.49px;font-size:12px;font-weight:400;color:#101010;letter-spacing:0.16px;">Get passport... OK</div>
<div class="t" style="left:14.6px;top:534.49px;font-size:12px;font-weight:400;color:#101010;transform:scaleX(1.0985010706638114);transform-origin:0 0;">19:57:01</div>
<div class="t" style="left:80.4px;top:534.49px;font-size:12px;font-weight:400;color:#101010;letter-spacing:0.35px;">Model:  ; Capacity: 4294967296 LBAs</div>
<div class="t" style="left:14.6px;top:551.49px;font-size:12px;font-weight:400;color:#101010;transform:scaleX(1.0985010706638114);transform-origin:0 0;">19:57:02</div>
<div class="t" style="left:80.4px;top:551.49px;font-size:12px;font-weight:400;color:#101010;letter-spacing:0.16px;">Get passport... OK</div>
<div class="t" style="left:14.6px;top:568.49px;font-size:12px;font-weight:400;color:#101010;transform:scaleX(1.0985010706638114);transform-origin:0 0;">19:57:02</div>
<div class="t" style="left:80.4px;top:568.49px;font-size:12px;font-weight:400;color:#101010;letter-spacing:0.35px;">Model:  ; Capacity: 4294967296 LBAs</div>
<div class="t" style="left:14.6px;top:585.49px;font-size:12px;font-weight:400;color:#101010;transform:scaleX(1.0985010706638114);transform-origin:0 0;">19:57:02</div>
<div class="t" style="left:80.4px;top:585.49px;font-size:12px;font-weight:400;color:#101010;letter-spacing:0.16px;">Get passport... OK</div>
<div class="t" style="left:14.6px;top:602.49px;font-size:12px;font-weight:400;color:#101010;transform:scaleX(1.0985010706638114);transform-origin:0 0;">19:57:02</div>
<div class="t" style="left:80.4px;top:602.49px;font-size:12px;font-weight:400;color:#101010;letter-spacing:0.35px;">Model:  ; Capacity: 4294967296 LBAs</div>
<div class="t" style="left:14.6px;top:619.49px;font-size:12px;font-weight:400;color:#101010;transform:scaleX(1.0985010706638114);transform-origin:0 0;">19:57:03</div>
<div class="t" style="left:80.4px;top:619.49px;font-size:12px;font-weight:400;color:#101010;letter-spacing:0.16px;">Get passport... OK</div>
<div class="t" style="left:14.6px;top:636.49px;font-size:12px;font-weight:400;color:#101010;transform:scaleX(1.0985010706638114);transform-origin:0 0;">19:57:03</div>
<div class="t" style="left:80.4px;top:636.49px;font-size:12px;font-weight:400;color:#101010;letter-spacing:0.35px;">Model:  ; Capacity: 4294967296 LBAs</div>
<div class="t" style="left:14.6px;top:653.49px;font-size:12px;font-weight:400;color:#101010;transform:scaleX(1.0985010706638114);transform-origin:0 0;">19:57:06</div>
<div class="t" style="left:80.4px;top:653.49px;font-size:12px;font-weight:400;color:#101010;letter-spacing:0.16px;">Get passport... OK</div>
<div class="t" style="left:14.6px;top:670.49px;font-size:12px;font-weight:400;color:#101010;transform:scaleX(1.0985010706638114);transform-origin:0 0;">19:57:06</div>
<div class="t" style="left:80.4px;top:670.49px;font-size:12px;font-weight:400;color:#1a1ab0;letter-spacing:0.35px;">Model:  ; Capacity: 4294967296 LBAs</div>
<div class="a" style="left:666px;top:460px;width:17px;height:240px;background:#e9e9e9;border-left:1px solid #f6f6f6"></div>
<svg class="a" style="left:669px;top:466px" width="10" height="6"><path d="M1 5 L5 1 L9 5Z" fill="#404040"/></svg>
<svg class="a" style="left:669px;top:689px" width="10" height="6"><path d="M1 1 L5 5 L9 1Z" fill="#404040"/></svg>
<div class="a" style="left:667px;top:630px;width:14px;height:51px;border:1px solid #999;border-radius:2px;background:linear-gradient(90deg,#fafafa,#dedede)"></div>
<div class="a" style="left:670px;top:652px;width:7px;height:1px;background:#555"></div>
<div class="a" style="left:670px;top:655px;width:7px;height:1px;background:#555"></div>
<div class="a" style="left:670px;top:658px;width:7px;height:1px;background:#555"></div>
</div>
</body></html>
